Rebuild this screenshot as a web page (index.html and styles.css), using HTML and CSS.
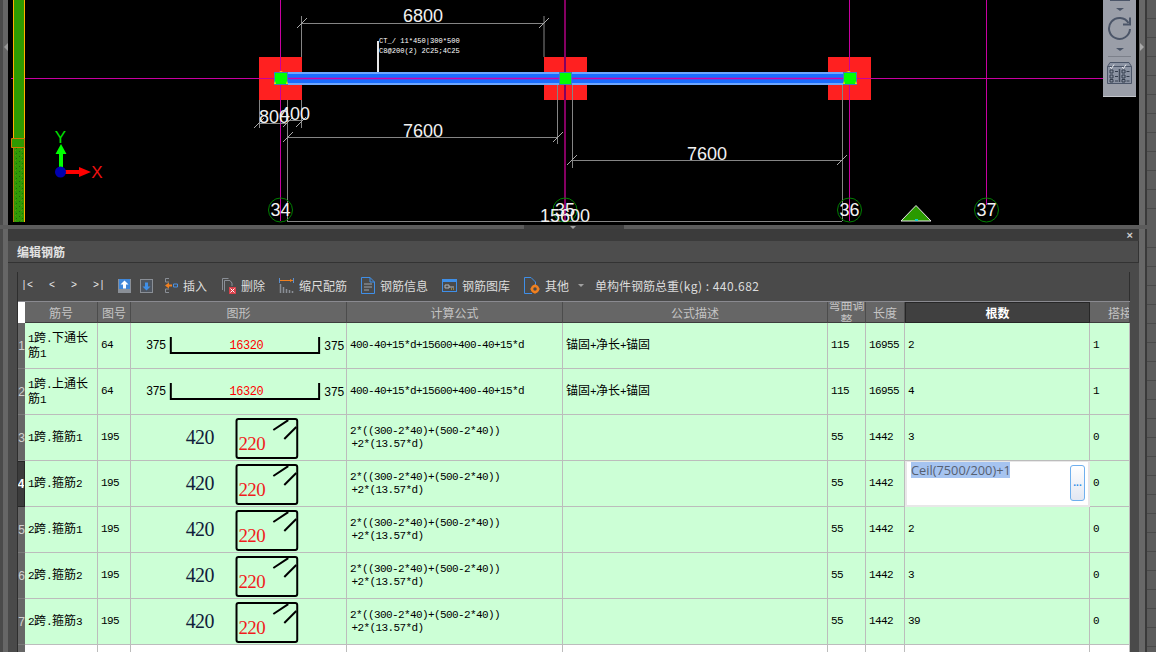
FILE: index.html
```html
<!DOCTYPE html>
<html lang="zh">
<head>
<meta charset="utf-8">
<title>编辑钢筋</title>
<link rel="stylesheet" href="styles.css">
</head>
<body>
<div class="app">
  <section class="top">
    <div class="edge-left"><i class="edge-arrow-left"></i></div>
    <div class="canvas">
      <svg class="drawing" width="1131" height="225" viewBox="8 0 1131 225">
        <defs>
          <pattern id="speckle" width="6" height="5" patternUnits="userSpaceOnUse">
            <rect width="6" height="5" fill="#2f9a05"/>
            <rect x="1" y="1" width="1" height="1" fill="#1c6a08"/>
            <rect x="4" y="3" width="1" height="1" fill="#1c6a08"/>
            <rect x="3" y="0" width="1" height="1" fill="#6d8a10"/>
          </pattern>
        </defs>
        <path class="grid" d="M11 78.5H1103M280.5 0V221M849.5 0V221M986.5 0V205"/>
        <path class="grid-hot" d="M565 0V221"/>
        <path class="bar-green" d="M14 0H24V138H14Z"/>
        <path class="bar-edge" d="M13.5 0V138M24.5 0V222"/>
        <rect class="bar-tex" x="14" y="147" width="10" height="75"/>
        <path class="bar-edge-dim" d="M13.5 147V222"/>
        <path class="bar-green bar-stroke" d="M11.5 138.5H24.5V147.5H11.5Z"/>

        <g class="red">
          <rect x="259" y="57" width="43" height="43"/>
          <rect x="544" y="57" width="43" height="43"/>
          <rect x="828" y="57" width="43" height="43"/>
        </g>
        <rect class="beam-rim" x="287" y="72" width="556" height="13"/>
        <rect class="beam-core" x="287" y="74" width="556" height="9"/>
        <path class="grid-beam" d="M287 78.5H843"/>
        <path class="grid" d="M259 78.5H274M856 78.5H871M280.5 57V72M280.5 85V100M849.5 57V72M849.5 85V100"/>
        <path class="grid-hot" d="M565 57V72M565 85V100"/>
        <g class="node">
          <rect x="274.5" y="72.5" width="13" height="12"/>
          <rect x="559.5" y="72.5" width="12" height="12"/>
          <rect x="843.5" y="72.5" width="13" height="12"/>
        </g>
        <path class="node-mark" d="M279 72l2-1 2 1zM274 84l1-3 1 3zM286 84l1-3 1 3zM846 72l3-1 2 1zM843 84l1-3 1 3zM855 84l1-3 1 3z"/>

        <path class="dim-line" d="M301.5 16V57M544 16V57M301 23.5H544M287.5 100V221M259.5 100V128M301.5 100V128M259 123.5H287M287 120.5H301M287 137.5H558M557.500 85V144M572.500 85V168M572 160.500H842M842.500 85V221M287 221.500H842"/>
        <path class="dim-tick" d="M297 28l10-10M539 28l10-10M254 128l10-10M283 127l10-10M296 127l10-10M283 142l10-10M553 142l10-10M567 165l10-10M837 165l10-10"/>
        <path class="leader" d="M378 41V72"/>
        <text class="note" x="379" y="43">CT_/ 11*450|300*500</text>
        <text class="note" x="379" y="53">C8@200(2) 2C25;4C25</text>
        <text class="dim" x="423" y="22" text-anchor="middle">6800</text>
        <text class="dim" x="423" y="137" text-anchor="middle">7600</text>
        <text class="dim" x="707" y="160" text-anchor="middle">7600</text>
        <text class="dim" x="274" y="123" text-anchor="middle">800</text>
        <text class="dim" x="295" y="120" text-anchor="middle">400</text>

        <g class="axis-ring">
          <circle cx="280.500" cy="210" r="12"/>
          <circle cx="565" cy="210" r="12"/>
          <circle cx="849.500" cy="210" r="12"/>
          <circle cx="986.500" cy="210" r="12"/>
        </g>
        <text class="dim" x="280.500" y="216" text-anchor="middle">34</text>
        <text class="dim" x="565" y="216" text-anchor="middle">35</text>
        <text class="dim" x="849.500" y="216" text-anchor="middle">36</text>
        <text class="dim" x="986.500" y="216" text-anchor="middle">37</text>
        <text class="dim" x="565" y="222" text-anchor="middle">15600</text>

        <path class="marker" d="M916 205.500L931 221H901Z"/>
        <rect class="marker-dot" x="915" y="219" width="3" height="2"/>

        <path class="axis-green" d="M59 172V154H55.500L61 144L66.500 154H63V172Z"/>
        <path class="axis-red" d="M62 170H79V167L91 172L79 177V174H62Z"/>
        <circle class="axis-blue" cx="60.500" cy="172" r="5.500"/>
        <text class="axis-y" x="60.500" y="143" text-anchor="middle">Y</text>
        <text class="axis-x" x="97" y="178" text-anchor="middle">X</text>
      </svg>
      <div class="view-tools">
        <i class="vt-top"></i>
        <i class="vt-caret"></i>
        <svg class="vt-rotate" width="26" height="26" viewBox="0 0 26 26">
          <path d="M22.500 8A10.500 10.500 0 1 0 24 14" fill="none" stroke="#4b5568" stroke-width="2"/>
          <path d="M24 2.500V9.500H17" fill="none" stroke="#4b5568" stroke-width="2"/>
        </svg>
        <i class="vt-caret"></i>
        <i class="vt-sep"></i>
        <svg class="vt-plan" width="25" height="24" viewBox="0 0 25 24">
          <path d="M.5 5.500L3 1.500H22L24.500 5.500V22.500H.5Z" fill="#8b93a3" stroke="#4b5568"/>
          <path d="M.5 5.500H24.500" stroke="#4b5568"/>
          <path d="M12.500 8V21" stroke="#3d4656" stroke-width="1.500"/>
          <path d="M3 6l1.500 1.500L7 3.500M15 6l1.500 1.500L19 3.500" fill="none" stroke="#e8eaee"/>
          <path d="M3 9h3v3H3zM3 14h3v3H3zM3 18.500h3v2.500H3zM15 9h3v3h-3zM15 14h3v3h-3zM15 18.500h3v2.500h-3z" fill="none" stroke="#333c4c"/>
          <path d="M8 10.500h3M8 15.500h3M8 20h3M19.500 10.500h3M19.500 15.500h3M19.500 20h3" stroke="#333c4c"/>
        </svg>
      </div>
    </div>
    <div class="edge-right"><i class="edge-arrow-right"></i></div>
  </section>

  <div class="splitter"><div class="splitter-grip"><i></i></div></div>

  <section class="lower">
    <div class="gutter-left"></div>
    <div class="editor">
      <div class="tabstrip"><span class="close">×</span></div>
      <div class="titlebar">编辑钢筋</div>
      <div class="editor-body">
        <div class="toolbar">
          <div class="nav"><span>|&lt;</span><span>&lt;</span><span>&gt;</span><span>&gt;|</span></div>
          <svg class="ico-move" width="13" height="14" viewBox="0 0 13 14"><rect width="13" height="14" fill="#8a8f96"/><rect x="1" y="1" width="11" height="9" fill="#4a4a4a"/><rect x="1" y="0" width="11" height="10" fill="#3f86d8"/><path d="M6.500 1.500L10.500 5.500H8V9.500H5V5.500H2.500Z" fill="#fff"/></svg>
          <svg class="ico-move2" width="13" height="14" viewBox="0 0 13 14"><rect x=".5" y=".5" width="12" height="13" fill="#4f5660" stroke="#8a8f96"/><path d="M6.500 11.500L2.500 7.500H5V3.500H8V7.500H10.500Z" fill="#3f8fe8"/></svg>
          <div class="tool tool-insert">
            <svg width="14" height="17" viewBox="0 0 14 17"><path d="M5 1.500H1.500V5H5M5 12H1.500V15.500H5" fill="none" stroke="#8a8f96"/><path d="M1 8.500L5 5.500V7.500H8V9.500H5V11.500Z" fill="#f08020"/><path d="M9.500 7H13.500V10H9.500Z" fill="none" stroke="#4a90e2"/></svg>
            <span>插入</span>
          </div>
          <div class="tool">
            <svg width="15" height="17" viewBox="0 0 15 17"><path d="M1.500 13V1.500H7.500" fill="none" stroke="#8a8f96"/><path d="M3.500 14.500V3.500H9L11 6V9" fill="none" stroke="#8a8f96"/><rect x="8" y="10" width="7" height="7" fill="#d8404a"/><path d="M9.500 11.500l4 4M13.500 11.500l-4 4" stroke="#fff"/></svg>
            <span>删除</span>
          </div>
          <div class="tool">
            <svg width="15" height="17" viewBox="0 0 15 17"><path d="M.5 1V6M14.500 1V6" stroke="#5a8fd0"/><path d="M1 3.500H14" stroke="#f08020"/><path d="M11 2l2.500 1.500L11 5z" fill="#f08020"/><path d="M1.500 7V16M4.500 10V16M7.500 12V16M10.500 13V16M13.500 14V16" stroke="#8a8f96" stroke-width="1.500"/></svg>
            <span>缩尺配筋</span>
          </div>
          <div class="tool">
            <svg width="14" height="17" viewBox="0 0 14 17"><path d="M.5.500H9L13.500 5V16.500H.5Z" fill="none" stroke="#3f8fe8"/><path d="M9 .5V5H13.500" fill="none" stroke="#3f8fe8"/><path d="M3 7H11M3 10H11M3 13H8" stroke="#9aa3ad"/></svg>
            <span>钢筋信息</span>
          </div>
          <div class="tool">
            <svg width="15" height="13" viewBox="0 0 15 13"><rect x=".5" y=".5" width="14" height="12" fill="none" stroke="#3f8fe8"/><rect x="1" y="1" width="13" height="2" fill="#3f8fe8"/><path d="M3 6H7V9H3ZM7 8H12" fill="none" stroke="#b0b4ba"/><path d="M9 10h1M11 10h1" stroke="#e8c040"/></svg>
            <span>钢筋图库</span>
          </div>
          <div class="tool">
            <svg width="16" height="17" viewBox="0 0 16 17"><path d="M8 16.500H.5V.5H7L11.500 5V8" fill="none" stroke="#3f8fe8"/><circle cx="11" cy="12" r="3" fill="none" stroke="#f08020" stroke-width="2.500"/><path d="M11 7.500V9M11 15V16.500M6.500 12H8M14 12H15.500" stroke="#f08020" stroke-width="1.500"/></svg>
            <span>其他</span>
            <i class="tool-caret"></i>
          </div>
          <span class="weight">单构件钢筋总重<span class="weight-num">(kg) : 440.682</span></span>
        </div>

        <div class="sheet">
          <div class="row head">
            <div class="hcell corner"></div>
            <div class="hcell">筋号</div>
            <div class="hcell">图号</div>
            <div class="hcell">图形</div>
            <div class="hcell">计算公式</div>
            <div class="hcell">公式描述</div>
            <div class="hcell wrap">弯曲调整</div>
            <div class="hcell">长度</div>
            <div class="hcell active">根数</div>
            <div class="hcell clip">搭接</div>
          </div>

          <div class="row">
            <div class="num">1</div>
            <div class="cell"><span>1<b>跨</b>.<b>下通长筋</b>1</span></div>
            <div class="cell">64</div>
            <div class="cell fig"><svg class="shape" width="216" height="45" viewBox="0 0 216 45"><text class="s-num" x="15" y="26">375</text><path class="s-line" d="M40 14V30H189V14"/><text class="s-red" x="99" y="26">16320</text><text class="s-num" x="194" y="27">375</text></svg></div>
            <div class="cell">400-40+15*d+15600+400-40+15*d</div>
            <div class="cell"><span><b>锚固</b>+<b>净长</b>+<b>锚固</b></span></div>
            <div class="cell">115</div>
            <div class="cell">16955</div>
            <div class="cell">2</div>
            <div class="cell">1</div>
          </div>

          <div class="row">
            <div class="num">2</div>
            <div class="cell"><span>1<b>跨</b>.<b>上通长筋</b>1</span></div>
            <div class="cell">64</div>
            <div class="cell fig"><svg class="shape" width="216" height="45" viewBox="0 0 216 45"><text class="s-num" x="15" y="26">375</text><path class="s-line" d="M40 14V30H189V14"/><text class="s-red" x="99" y="26">16320</text><text class="s-num" x="194" y="27">375</text></svg></div>
            <div class="cell">400-40+15*d+15600+400-40+15*d</div>
            <div class="cell"><span><b>锚固</b>+<b>净长</b>+<b>锚固</b></span></div>
            <div class="cell">115</div>
            <div class="cell">16955</div>
            <div class="cell">4</div>
            <div class="cell">1</div>
          </div>

          <div class="row">
            <div class="num">3</div>
            <div class="cell"><span>1<b>跨</b>.<b>箍筋</b>1</span></div>
            <div class="cell">195</div>
            <div class="cell fig"><svg class="shape" width="216" height="45" viewBox="0 0 216 45"><text class="s-big" x="55" y="29">420</text><rect class="s-box" x="106" y="4" width="61" height="39" rx="2"/><path class="s-hook" d="M143 15L158 5M154 24L166 12"/><text class="s-bigred" x="108" y="35">220</text></svg></div>
            <div class="cell"><span class="formula">2*((300-2*40)+(500-2*40))<br>&#8201;+2*(13.57*d)</span></div>
            <div class="cell"></div>
            <div class="cell">55</div>
            <div class="cell">1442</div>
            <div class="cell">3</div>
            <div class="cell">0</div>
          </div>

          <div class="row">
            <div class="num current">4</div>
            <div class="cell"><span>1<b>跨</b>.<b>箍筋</b>2</span></div>
            <div class="cell">195</div>
            <div class="cell fig"><svg class="shape" width="216" height="45" viewBox="0 0 216 45"><text class="s-big" x="55" y="29">420</text><rect class="s-box" x="106" y="4" width="61" height="39" rx="2"/><path class="s-hook" d="M143 15L158 5M154 24L166 12"/><text class="s-bigred" x="108" y="35">220</text></svg></div>
            <div class="cell"><span class="formula">2*((300-2*40)+(500-2*40))<br>&#8201;+2*(13.57*d)</span></div>
            <div class="cell"></div>
            <div class="cell">55</div>
            <div class="cell">1442</div>
            <div class="cell editing">
              <span class="edit-text">Ceil(7500/200)+1</span>
              <span class="edit-btn">...</span>
            </div>
            <div class="cell">0</div>
          </div>

          <div class="row">
            <div class="num">5</div>
            <div class="cell"><span>2<b>跨</b>.<b>箍筋</b>1</span></div>
            <div class="cell">195</div>
            <div class="cell fig"><svg class="shape" width="216" height="45" viewBox="0 0 216 45"><text class="s-big" x="55" y="29">420</text><rect class="s-box" x="106" y="4" width="61" height="39" rx="2"/><path class="s-hook" d="M143 15L158 5M154 24L166 12"/><text class="s-bigred" x="108" y="35">220</text></svg></div>
            <div class="cell"><span class="formula">2*((300-2*40)+(500-2*40))<br>&#8201;+2*(13.57*d)</span></div>
            <div class="cell"></div>
            <div class="cell">55</div>
            <div class="cell">1442</div>
            <div class="cell">2</div>
            <div class="cell">0</div>
          </div>

          <div class="row">
            <div class="num">6</div>
            <div class="cell"><span>2<b>跨</b>.<b>箍筋</b>2</span></div>
            <div class="cell">195</div>
            <div class="cell fig"><svg class="shape" width="216" height="45" viewBox="0 0 216 45"><text class="s-big" x="55" y="29">420</text><rect class="s-box" x="106" y="4" width="61" height="39" rx="2"/><path class="s-hook" d="M143 15L158 5M154 24L166 12"/><text class="s-bigred" x="108" y="35">220</text></svg></div>
            <div class="cell"><span class="formula">2*((300-2*40)+(500-2*40))<br>&#8201;+2*(13.57*d)</span></div>
            <div class="cell"></div>
            <div class="cell">55</div>
            <div class="cell">1442</div>
            <div class="cell">3</div>
            <div class="cell">0</div>
          </div>

          <div class="row">
            <div class="num">7</div>
            <div class="cell"><span>2<b>跨</b>.<b>箍筋</b>3</span></div>
            <div class="cell">195</div>
            <div class="cell fig"><svg class="shape" width="216" height="45" viewBox="0 0 216 45"><text class="s-big" x="55" y="29">420</text><rect class="s-box" x="106" y="4" width="61" height="39" rx="2"/><path class="s-hook" d="M143 15L158 5M154 24L166 12"/><text class="s-bigred" x="108" y="35">220</text></svg></div>
            <div class="cell"><span class="formula">2*((300-2*40)+(500-2*40))<br>&#8201;+2*(13.57*d)</span></div>
            <div class="cell"></div>
            <div class="cell">55</div>
            <div class="cell">1442</div>
            <div class="cell">39</div>
            <div class="cell">0</div>
          </div>

          <div class="row blank">
            <div class="num"></div>
            <div class="cell"></div><div class="cell"></div><div class="cell"></div><div class="cell"></div>
            <div class="cell"></div><div class="cell"></div><div class="cell"></div><div class="cell"></div><div class="cell"></div>
          </div>
        </div>
      </div>
    </div>
    <div class="gutter-right"></div>
  </section>
</div>
</body>
</html>
```

FILE: styles.css
```css
* { box-sizing: border-box; }
html, body { margin: 0; padding: 0; }
body {
  width: 1156px;
  height: 652px;
  overflow: hidden;
  background: #575757;
  font-family: "Noto Sans CJK SC", "Liberation Sans", sans-serif;
}
i { display: block; font-style: normal; }
.app { display: flex; flex-direction: column; height: 652px; overflow: hidden; }

/* top CAD viewport */
.top { display: flex; height: 225px; flex: none; }
.edge-left {
  position: relative;
  width: 8px;
  background: linear-gradient(90deg, #4a4a4a 0 3px, #666 3px 8px);
}
.edge-arrow-left {
  position: absolute; left: 4px; top: 43px;
  border: 4px solid transparent; border-left: 0; border-right: 4px solid #9a9a9a;
}
.canvas { position: relative; width: 1131px; background: #000; overflow: hidden; }
.drawing { display: block; }
.edge-right {
  position: relative;
  width: 17px;
  background:
    repeating-linear-gradient(180deg, #5c5c5c 0 18px, #4a4a4a 18px 19px) 8px 0 / 9px 100% no-repeat,
    linear-gradient(90deg, #686868 0 6px, #3a3a3a 6px 8px, #5c5c5c 8px);
}
.edge-arrow-right {
  position: absolute; left: 1px; top: 43px;
  border: 4px solid transparent; border-right: 0; border-left: 4px solid #a8a8a8;
}

.grid { stroke: #c800a0; stroke-width: 1; fill: none; }
.grid-hot { stroke: #850062; stroke-width: 2; fill: none; }
.grid-beam { stroke: #d400a8; stroke-width: 1.5; fill: none; }
.bar-green { fill: #2e9a00; }
.bar-stroke { stroke: #d07a00; stroke-width: 1; }
.bar-edge { stroke: #ffb000; stroke-width: 1; fill: none; }
.bar-edge-dim { stroke: #b07a10; stroke-width: 1; fill: none; }
.bar-tex { fill: url(#speckle); }
.red rect { fill: #ff2020; }
.beam-rim { fill: #6ea6ff; }
.beam-core { fill: #1a6cff; }
.node rect { fill: #00ff00; stroke: #3f7fb8; stroke-width: 1; }
.node-mark { fill: #ffe000; }
.dim-line { stroke: #858585; stroke-width: 1; fill: none; }
.dim-tick { stroke: #aaa; stroke-width: 1; fill: none; }
.leader { stroke: #e8e8e8; stroke-width: 2; fill: none; }
.note { font: 7.1px "Liberation Mono", monospace; fill: #fff; }
.dim { font: 18px "Liberation Sans", sans-serif; fill: #f2f2f2; }
.axis-ring circle { fill: none; stroke: #008000; stroke-width: 1; }
.marker { fill: #2a9a00; stroke: #e8e8e8; stroke-width: 1; }
.marker-dot { fill: #10d0d0; }
.axis-green { fill: #00ff00; }
.axis-red { fill: #ff0000; }
.axis-blue { fill: #0000b0; }
.axis-y { font: 17px "Liberation Sans", sans-serif; fill: #00e000; }
.axis-x { font: 17px "Liberation Sans", sans-serif; fill: #f01010; }

.view-tools {
  position: absolute;
  left: 1095px;
  top: 0;
  width: 33px;
  height: 97px;
  background: #9a9ea8;
  display: flex;
  flex-direction: column;
  align-items: center;
  border-bottom: 1px solid #c4c6cc;
}
.vt-top { width: 20px; height: 1px; margin-bottom: 7px; background: #4b5568; }
.vt-caret { border: 3px solid transparent; border-top: 3px solid #4b5568; border-left-width: 4px; border-right-width: 4px; border-bottom: 0; height: 3px; width: 8px; }
.vt-rotate { margin: 4px 0 7px -2px; display: block; }
.vt-sep { width: 23px; height: 1px; background: #7c808a; margin: 5px 0 4px; }
.vt-plan { display: block; }

/* splitter */
.splitter { height: 4px; flex: none; padding-left: 524px; background: #5c5c5c; }
.splitter-grip { position: relative; width: 100px; height: 4px; background: #3e3e3e; }
.splitter-grip i {
  position: absolute; left: 46px; top: 1px;
  border: 3px solid transparent; border-top-color: #a0a0a0; border-bottom: 0;
}

/* lower panel */
.lower { display: flex; flex: 1; min-height: 0; }
.gutter-left { width: 8px; flex: none; background: linear-gradient(90deg, #4a4a4a 0 3px, #666 3px 8px); }
.gutter-right {
  width: 17px; flex: none;
  background:
    repeating-linear-gradient(180deg, #5c5c5c 0 18px, #4a4a4a 18px 19px) 8px 0 / 9px 100% no-repeat,
    linear-gradient(90deg, #686868 0 6px, #3a3a3a 6px 8px, #5c5c5c 8px);
}
.editor { width: 1131px; flex: none; background: #4a4a4a; display: flex; flex-direction: column; overflow: hidden; }
.tabstrip {
  height: 12px; flex: none; background: #3b3b3b;
  display: flex; justify-content: flex-end; align-items: center;
  padding-right: 6px;
}
.close { font: bold 11px/12px "Liberation Sans", sans-serif; color: #cfcfcf; }
.titlebar {
  height: 22px; flex: none;
  background: #4d4d4d;
  border-bottom: 1px solid #333;
  border-right: 1px solid #333;
  padding-left: 9px;
  font-size: 12px;
  font-weight: 700;
  line-height: 21px;
  color: #e2e2e2;
}
.editor-body { padding: 9px 0 0 9px; flex: 1; min-height: 0; }

.toolbar {
  width: 1113px;
  height: 30px;
  border-left: 1px solid #2e2e2e;
  border-right: 1px solid #2e2e2e;
  display: flex;
  align-items: center;
  padding-bottom: 3px;
  color: #dcdcdc;
  font-size: 12px;
}
.nav {
  display: flex;
  width: 84px;
  margin-left: 3px;
  justify-content: space-between;
  font: 10px "Liberation Mono", monospace;
  color: #e8e8e8;
}
.ico-move { margin-left: 13px; flex: none; }
.ico-move2 { margin-left: 9px; flex: none; }
.tool { display: flex; align-items: center; gap: 5px; margin-left: 14px; white-space: nowrap; }
.tool svg { flex: none; }
.tool-insert { margin-left: 11px; }
.tool-caret { margin-left: 4px; border: 3px solid transparent; border-top-color: #a0a0a0; border-bottom: 0; }
.weight { margin-left: 11px; white-space: nowrap; }
.weight-num { letter-spacing: .5px; }

/* sheet */
.sheet {
  width: 1113px;
  border-left: 1px solid #2e2e2e;
  font: 11px/13px "Liberation Mono", "Noto Sans CJK SC", monospace;
  letter-spacing: -.6px;
  color: #000;
}
.row {
  display: grid;
  grid-template-columns: 7px 73px 33px 216px 216px 265px 38px 39px 185px 40px;
  height: 46px;
  background: #ccffd6;
}
.row.head {
  height: 22px;
  background: #666;
  border-top: 1px solid #8a8a90;
  margin-top: -1px;
}
.row.blank { background: #fff; }
.hcell {
  display: flex;
  align-items: center;
  justify-content: center;
  overflow: hidden;
  border-right: 1px solid #4c4c4c;
  border-bottom: 1px solid #3c3c3c;
  font: 12px/15px "Noto Sans CJK SC", sans-serif;
  letter-spacing: 0;
  color: #c4c4c4;
}
.hcell.corner { background: #fff; border: 0; }
.hcell.wrap { text-align: center; }
.hcell.active { background: #404040; border: 1px solid #262626; color: #fff; font-weight: 700; }
.hcell.clip { justify-content: flex-start; padding-left: 18px; white-space: nowrap; }
.num {
  display: flex; align-items: center; justify-content: center;
  overflow: hidden;
  background: #666;
  border-bottom: 1px solid #7a7a7a;
  font: 12px "Liberation Sans", sans-serif;
  letter-spacing: 0;
  color: #d0d0d0;
}
.num.current { background: #3c3c3c; border: 1px solid #262626; border-left: 0; color: #fff; font-weight: 700; }
.cell {
  display: flex;
  align-items: center;
  padding-left: 3px;
  overflow: hidden;
  white-space: pre-line;
  border-right: 1px solid #bcbcbc;
  border-bottom: 1px solid #bcbcbc;
}
.cell b {
  font: 12px/1 "Noto Sans CJK SC", sans-serif;
  letter-spacing: 0;
}
.cell.fig { padding: 0; }
.formula { white-space: nowrap; margin-top: 1px; }
.shape { display: block; }
.s-num { font: 12px "Liberation Mono", monospace; letter-spacing: -.6px; fill: #000; }
.s-red { font: 12px "Liberation Mono", monospace; letter-spacing: -.4px; fill: #f00; }
.s-line { stroke: #000; stroke-width: 2; fill: none; }
.s-big { font: 20px "Liberation Serif", serif; fill: #10203a; }
.s-bigred { font: 19px "Liberation Serif", serif; fill: #f01c1c; }
.s-box { stroke: #000; stroke-width: 2; fill: none; }
.s-hook { stroke: #000; stroke-width: 2; fill: none; }

.cell.editing {
  display: flex;
  align-items: flex-start;
  padding: 0 3px 0 4px;
  background: #fff;
  border: 2px solid #e8e8e8;
  border-top-width: 1px;
  font: 12.8px/16px "Open Sans", "Liberation Sans", sans-serif;
  letter-spacing: 0;
}
.edit-text { flex: 1; white-space: nowrap; }
.edit-text { background: linear-gradient(#a6c4f0, #a6c4f0) 0 0 / 99px 16px no-repeat; color: #566070; }
.edit-btn {
  flex: none;
  width: 15px;
  height: 36px;
  margin-top: 3px;
  display: flex;
  align-items: center;
  justify-content: center;
  border: 1px solid #6fb0ee;
  border-radius: 3px;
  background: linear-gradient(#fff, #e2e7f2);
  font: bold 10px/10px "Liberation Sans", sans-serif;
  color: #2f8fe8;
}
```
